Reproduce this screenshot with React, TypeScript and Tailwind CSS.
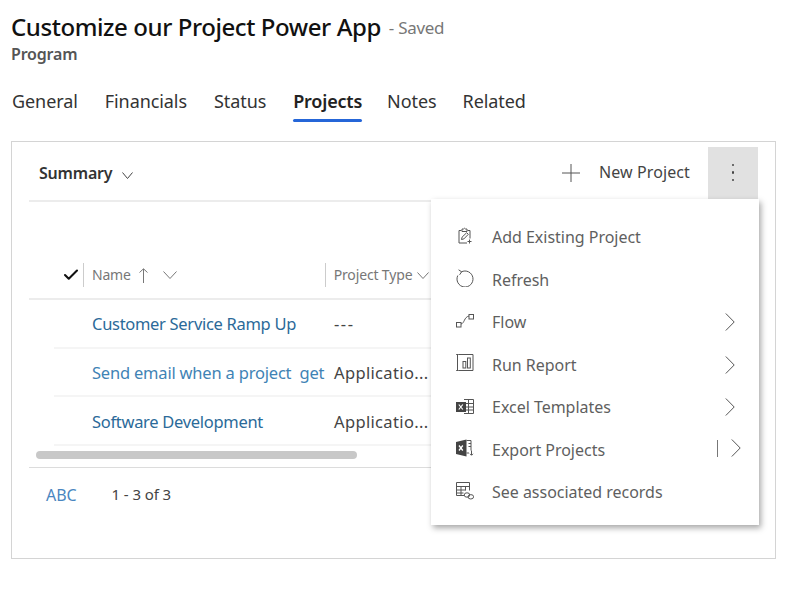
import { Check } from 'lucide-react'
import type { ReactNode } from 'react'

const FONT = "font-['Noto_Sans','Open_Sans',sans-serif]"

function ChevDown({ w, h, className }: { w: number; h: number; className?: string }) {
  return (
    <svg width={w} height={h} viewBox={`0 0 ${w} ${h}`} fill="none" stroke="currentColor" strokeWidth="1" className={className}>
      <path d={`M0.5 0.5L${w / 2} ${h - 0.5}L${w - 0.5} 0.5`} />
    </svg>
  )
}

function ChevRight({ className }: { className?: string }) {
  return (
    <svg width="10" height="18" viewBox="0 0 10 18" fill="none" stroke="#555" strokeWidth="1" className={className}>
      <path d="M0.8 0.5L9.2 9L0.8 17.5" />
    </svg>
  )
}

function AddIcon() {
  return (
    <svg width="18" height="18" viewBox="0 0 18 18" fill="none" stroke="#555" strokeWidth="1">
      <path d="M5.5 3.5H3v12.5h8M11.5 3.5H14v8" />
      <path d="M6 3.5V2h1.5a1.2 1.2 0 0 1 2 0H11v2.5H6z" />
      <path d="M5.5 12.5l.6-2.4 4.6-4.4 1.6 1.6-4.4 4.6z" />
      <path d="M13.5 12.5v4M11.5 14.5h4" />
    </svg>
  )
}

function RefreshIcon() {
  return (
    <svg width="18" height="18" viewBox="0 0 18 18" fill="none" stroke="#555" strokeWidth="1">
      <path d="M5.3 2.9A8 8 0 1 1 1.8 6.5" />
      <path d="M2.6 .8l3 2-2 3" />
    </svg>
  )
}

function FlowIcon() {
  return (
    <svg width="18" height="18" viewBox="0 0 18 18" fill="none" stroke="#555" strokeWidth="1">
      <rect x="0.5" y="10.5" width="4.5" height="4.5" />
      <rect x="13" y="2.5" width="4.5" height="4.5" />
      <path d="M5 12c3.5-.5 3-7 8-8" />
    </svg>
  )
}

function ReportIcon() {
  return (
    <svg width="18" height="18" viewBox="0 0 18 18" fill="none" stroke="#555" strokeWidth="1">
      <path d="M3 .5h14v16H3M1.5 1v15M.2 .5h2.6M.2 16.5h2.6" />
      <rect x="7" y="7.5" width="2.8" height="6.5" />
      <rect x="11.5" y="4" width="2.8" height="10" />
    </svg>
  )
}

function ExcelTemplateIcon() {
  return (
    <svg width="18" height="18" viewBox="0 0 18 18" fill="none">
      <path d="M8 2.5h9.5v14H8M8 6.5h9.5M8 10h9.5M8 13h9.5M12.5 2.5v14" stroke="#555" />
      <rect x="0" y="5" width="10" height="10" fill="#444" />
      <path d="M2.8 7.5l4 5M6.8 7.5l-4 5" stroke="#fff" strokeWidth="1.2" />
    </svg>
  )
}

function ExportIcon() {
  return (
    <svg width="18" height="18" viewBox="0 0 18 18" fill="none">
      <path d="M0 3L10.5 .5v17L0 15z" fill="#444" />
      <path d="M3 6.5l3.8 5M6.8 6.5L3 11.5" stroke="#fff" strokeWidth="1.3" />
      <path d="M10.5 1.5h4.5v10M12.5 4.5h2.5M12.5 7.5h2.5M10.5 14h2.5" stroke="#555" />
      <path d="M15.5 11.5v4.5M14 14.8l1.5 1.5 1.5-1.5" stroke="#555" />
    </svg>
  )
}

function RecordsIcon() {
  return (
    <svg width="18" height="18" viewBox="0 0 18 18" fill="none" stroke="#555" strokeWidth="1">
      <path d="M8 13.5H.5V.5h13v8" />
      <path d="M.5 4.5h13M.5 8h9M.5 11h7M5 4.5v9M9.5 4.5v4" />
      <ellipse cx="11" cy="13" rx="2.8" ry="2.2" />
      <ellipse cx="14.8" cy="14.8" rx="2.8" ry="2.2" />
    </svg>
  )
}

function MenuItem({ icon, label, arrow, split }: { icon: ReactNode; label: string; arrow?: boolean; split?: boolean }) {
  return (
    <div className="flex h-[42.5px] items-center pl-[25px] pr-[24px]">
      <span className="mb-[3px] flex w-[36px] shrink-0 items-center">{icon}</span>
      <span className="flex-1 text-[16px] tracking-[-0.02px] text-[#5f5f5f]">{label}</span>
      {split && <span className="mb-[2px] mr-[13px] h-[17px] w-px bg-[#777]" />}
      {arrow && <ChevRight className={split ? '-mr-[6px] mb-[3px]' : ''} />}
    </div>
  )
}

function Row({ name, type, muted }: { name: string; type: string; muted?: boolean }) {
  return (
    <div className="ml-[25px] flex h-[48.7px] items-center border-b-2 border-[#f5f5f5] pt-[3px]">
      <span className={`ml-[38px] w-[242px] shrink-0 truncate text-[16.5px] whitespace-pre ${muted ? 'tracking-[-0.2px] text-[#3f83b5]' : 'tracking-[-0.3px] text-[#2b6a99]'}`}>
        {name}
      </span>
      <span className={`text-[16.5px] text-[#444] ${type === '---' ? 'tracking-[1.5px]' : 'tracking-[0.35px]'}`}>{type}</span>
    </div>
  )
}

export default function App() {
  return (
    <div className={`${FONT} h-[606px] w-[800px] bg-white pl-[11px] pr-6 pt-[11px]`}>
      <div className="flex items-baseline">
        <h1 className="text-[24px] leading-8 font-medium tracking-[-0.42px] text-[#111]">Customize our Project Power App</h1>
        <span className="relative -top-[2px] ml-2 text-[17px] tracking-[-0.3px] text-[#777]">- Saved</span>
      </div>
      <div className="mt-px text-[16px] leading-5 font-semibold tracking-[-0.2px] text-[#555]">Program</div>

      <div className="mt-[25px] flex gap-[27px] text-[18px] leading-6 tracking-[-0.08px] text-[#333]">
        <span className="pl-px">General</span>
        <span>Financials</span>
        <span>Status</span>
        <span className="relative font-semibold tracking-[-0.2px] text-[#222]">
          Projects
          <span className="absolute -bottom-[9px] left-0 h-[3px] w-full rounded-sm bg-[#2566d8]" />
        </span>
        <span className="-ml-[2px]">Notes</span>
        <span className="-ml-px">Related</span>
      </div>

      <div className="relative mt-[28px] h-[418px] border border-[#d4d4d4] pl-[17px] pr-[17px]">
        <div className="flex h-[60px] items-center border-b-2 border-[#ececec] pt-1">
          <span className="ml-[10px] text-[16px] font-semibold tracking-[-0.2px] text-[#333]">Summary</span>
          <ChevDown w={11} h={7} className="ml-[10px] mt-1 text-[#444]" />
          <div className="flex-1" />
          <svg width="18" height="18" viewBox="0 0 18 18" stroke="#555" strokeWidth="1" fill="none">
            <path d="M9 0v18M0 9h18" />
          </svg>
          <span className="mb-[2px] ml-[19px] mr-[18px] text-[16px] tracking-[0.1px] text-[#444]">New Project</span>
          <span className="-mt-px flex h-[52px] w-[50px] flex-col items-center justify-center gap-[5px] bg-[#e1e1e1]">
            <span className="h-[2.5px] w-[2.5px] rounded-full bg-[#444]" />
            <span className="h-[2.5px] w-[2.5px] rounded-full bg-[#444]" />
            <span className="h-[2.5px] w-[2.5px] rounded-full bg-[#444]" />
          </span>
        </div>

        <div className="mt-[50px] flex h-[48px] items-center border-b-2 border-[#ececec] text-[14px] text-[#777]">
          <Check size={18} strokeWidth={2.8} className="ml-[33px] text-[#111]" />
          <span className="ml-[3px] h-6 w-px bg-[#ccc]" />
          <span className="mb-[2px] ml-2 tracking-[-0.2px]">Name</span>
          <svg width="9" height="15" viewBox="0 0 9 15" fill="none" stroke="currentColor" strokeWidth="1" className="ml-[8px]">
            <path d="M4.5 1v14M.5 4.5L4.5 .8L8.5 4.5" />
          </svg>
          <ChevDown w={14} h={8} className="ml-[15px]" />
          <span className="ml-[148px] h-6 w-px bg-[#ccc]" />
          <span className="mb-[2px] ml-2 tracking-[-0.15px]">Project Type</span>
          <ChevDown w={12} h={7} className="ml-[5px]" />
        </div>

        <Row name="Customer Service Ramp Up" type="---" />
        <Row name="Send email when a project  get" type="Applicatio..." muted />
        <Row name="Software Development" type="Applicatio..." />

        <div className="ml-[7px] mt-[5px] h-2 w-[321px] rounded-full bg-[#c8c8c8]" />
        <div className="mt-[8px] flex h-[54px] items-center border-t border-[#dcdcdc]">
          <span className="ml-[17px] text-[16px] tracking-[-0.05px] text-[#4a86c0]">ABC</span>
          <span className="ml-[35px] text-[15px] tracking-[-0.1px] text-[#444]">1 - 3 of 3</span>
        </div>

        <div className="absolute left-[419px] top-[57px] w-[328px] bg-white pb-[11px] pt-[17px] shadow-[2px_3px_6px_rgba(0,0,0,0.35)]">
          <MenuItem icon={<AddIcon />} label="Add Existing Project" />
          <MenuItem icon={<RefreshIcon />} label="Refresh" />
          <MenuItem icon={<FlowIcon />} label="Flow" arrow />
          <MenuItem icon={<ReportIcon />} label="Run Report" arrow />
          <MenuItem icon={<ExcelTemplateIcon />} label="Excel Templates" arrow />
          <MenuItem icon={<ExportIcon />} label="Export Projects" arrow split />
          <MenuItem icon={<RecordsIcon />} label="See associated records" />
        </div>
      </div>
    </div>
  )
}
